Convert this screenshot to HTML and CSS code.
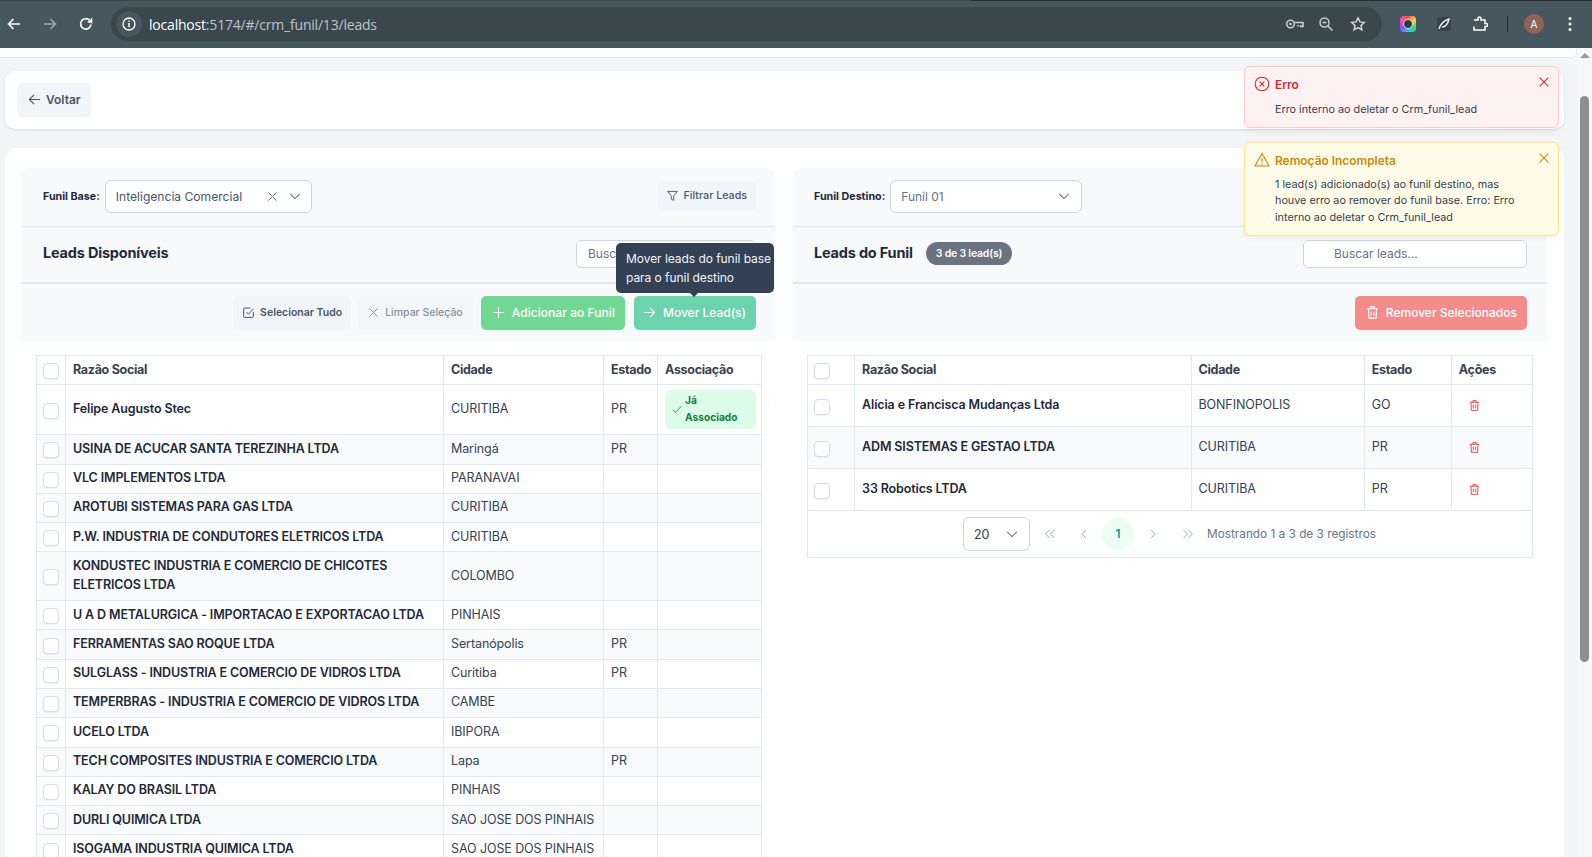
FILE: index.html
```html
<!DOCTYPE html>
<html lang="pt-BR">
<head>
<meta charset="utf-8">
<title>Leads do funil</title>
<link rel="stylesheet" href="styles.css">
</head>
<body>
<svg class="sprite" aria-hidden="true">
  <symbol id="i-trash" viewBox="0 0 16 16"><path d="M2.5 4h11M6 4V2h4v2M3.7 4l.4 10h7.8l.4-10M6.5 7v4.5M9.5 7v4.5" fill="none" stroke="currentColor" stroke-width="1.2"/></symbol>
  <symbol id="i-down" viewBox="0 0 16 16"><path d="M2.5 5.5 8 11l5.5-5.5" fill="none" stroke="currentColor" stroke-width="1.2"/></symbol>
  <symbol id="i-x" viewBox="0 0 16 16"><path d="m3 3 10 10M13 3 3 13" fill="none" stroke="currentColor" stroke-width="1.2"/></symbol>
</svg>
<header class="chrome">
  <div class="tabline"></div>
  <div class="toolbar">
    <svg class="nav" viewBox="0 0 16 16"><path d="M14 8H3M7.500 3 2.500 8l5 5" fill="none" stroke="#fff" stroke-width="1.600"/></svg>
    <svg class="nav nav-off" viewBox="0 0 16 16"><path d="M2 8h11M8.500 3l5 5-5 5" fill="none" stroke="#9aa5ab" stroke-width="1.600"/></svg>
    <svg class="nav" viewBox="0 0 16 16"><path d="M13 8.500A5.200 5.200 0 1 1 11.500 4.200L13.500 6V2.200M13.500 6H9.700" fill="none" stroke="#fff" stroke-width="1.700"/></svg>
    <div class="omnibox">
      <span class="site-info"><svg viewBox="0 0 16 16"><circle cx="8" cy="8" r="6" fill="none" stroke="#fff" stroke-width="1.300"/><path d="M8 7v4.200M8 4.500v1.300" stroke="#fff" stroke-width="1.500"/></svg></span>
      <span class="url"><span class="url-host">localhost</span>:5174/#/crm_funil/13/leads</span>
      <span class="omni-actions">
        <svg viewBox="0 0 20 16"><circle cx="5.500" cy="8" r="3.800" fill="none" stroke="#c9d0d4" stroke-width="1.500"/><circle cx="5.500" cy="8" r="1.300" fill="#c9d0d4"/><path d="M9.500 6.500h8.500v4h-2.500V9M13 9v1.500" fill="none" stroke="#c9d0d4" stroke-width="1.500"/></svg>
        <svg viewBox="0 0 16 16"><circle cx="6.500" cy="6.500" r="4.500" fill="none" stroke="#c9d0d4" stroke-width="1.500"/><path d="m10 10 4.500 4.500M4.500 6.500h4" stroke="#c9d0d4" stroke-width="1.500"/></svg>
        <svg viewBox="0 0 16 16"><path d="m8 1.800 1.900 4.100 4.400.5-3.300 3 .9 4.400L8 11.600l-3.900 2.200.9-4.400-3.300-3 4.400-.5z" fill="none" stroke="#d5dadd" stroke-width="1.400"/></svg>
      </span>
    </div>
    <span class="ring"><span class="ring-core"></span></span>
    <svg class="ext ext-pen" viewBox="0 0 16 16"><rect x="1" y="1" width="14" height="14" rx="2" fill="#35444c"/><path d="M3 13c1-4 4-8 10-10-1 5-4 8-7 8" fill="none" stroke="#e8edf0" stroke-width="1.500"/></svg>
    <svg class="ext ext-puzzle" viewBox="0 0 16 16"><path d="M2 4h4V2.500a1.500 1.500 0 0 1 3 0V4h4v3.500h1.200a1.500 1.500 0 0 1 0 3H13V14H2v-3.500" fill="none" stroke="#fff" stroke-width="1.500"/></svg>
    <span class="divider"></span>
    <span class="avatar">A</span>
    <svg class="dots" viewBox="0 0 4 16"><circle cx="2" cy="2.500" r="1.500" fill="#fff"/><circle cx="2" cy="8" r="1.500" fill="#fff"/><circle cx="2" cy="13.500" r="1.500" fill="#fff"/></svg>
  </div>
</header>

<div class="viewport">
  <div class="app">
    <div class="app-strip"></div>
    <main class="content">
      <section class="card topcard">
        <button class="btn btn-back">
          <svg viewBox="0 0 16 16"><path d="M14 8H2.500M7.500 3l-5 5 5 5" fill="none" stroke="currentColor" stroke-width="1.200"/></svg>Voltar
        </button>
      </section>

      <section class="card board">
        <div class="panel">
          <div class="panel-row row-funnel">
            <label class="field-label">Funil Base:</label>
            <div class="select select-base">
              <span class="select-value">Inteligencia Comercial</span>
              <svg class="sel-x"><use href="#i-x"/></svg>
              <svg class="sel-down"><use href="#i-down"/></svg>
            </div>
            <button class="btn btn-filter">
              <svg viewBox="0 0 16 16"><path d="M2 3h12L9.500 8.500V14l-3-1.500v-4z" fill="none" stroke="currentColor" stroke-width="1.100"/></svg>Filtrar Leads
            </button>
          </div>
          <div class="panel-row row-title">
            <h2>Leads Disponíveis</h2>
            <div class="search search-left">Buscar leads...</div>
          </div>
          <div class="panel-row row-actions">
            <button class="btn btn-soft">
              <svg viewBox="0 0 16 16"><path d="M14 7.500V13a1 1 0 0 1-1 1H3a1 1 0 0 1-1-1V3.500a1 1 0 0 1 1-1h7.500M5.500 7.500 8 10l6-6.500" fill="none" stroke="currentColor" stroke-width="1.200"/></svg>Selecionar Tudo
            </button>
            <button class="btn btn-soft btn-dim">
              <svg><use href="#i-x"/></svg>Limpar Seleção
            </button>
            <button class="btn btn-add">
              <svg viewBox="0 0 16 16"><path d="M8 2v12M2 8h12" stroke="currentColor" stroke-width="1.200"/></svg>Adicionar ao Funil
            </button>
            <button class="btn btn-move">
              <svg viewBox="0 0 16 16"><path d="M2 8h11.500M8.500 3l5 5-5 5" fill="none" stroke="currentColor" stroke-width="1.200"/></svg>Mover Lead(s)
            </button>
          </div>
          <div class="table-wrap">
            <table class="grid grid-left">
              <colgroup><col class="lc1"><col class="lc2"><col class="lc3"><col class="lc4"><col class="lc5"></colgroup>
              <thead><tr><th><span class="check"></span></th><th>Razão Social</th><th>Cidade</th><th>Estado</th><th>Associação</th></tr></thead>
              <tbody>
                <tr class="row-tall"><td><span class="check"></span></td><td class="name">Felipe Augusto Stec</td><td>CURITIBA</td><td>PR</td><td><span class="assoc"><svg viewBox="0 0 16 16"><path d="m2.500 9 3.500 3.500 7.500-8" fill="none" stroke="currentColor" stroke-width="1.200"/></svg><span>Já Associado</span></span></td></tr>
                <tr><td><span class="check"></span></td><td class="name">USINA DE ACUCAR SANTA TEREZINHA LTDA</td><td>Maringá</td><td>PR</td><td></td></tr>
                <tr><td><span class="check"></span></td><td class="name">VLC IMPLEMENTOS LTDA</td><td>PARANAVAI</td><td></td><td></td></tr>
                <tr><td><span class="check"></span></td><td class="name">AROTUBI SISTEMAS PARA GAS LTDA</td><td>CURITIBA</td><td></td><td></td></tr>
                <tr><td><span class="check"></span></td><td class="name">P.W. INDUSTRIA DE CONDUTORES ELETRICOS LTDA</td><td>CURITIBA</td><td></td><td></td></tr>
                <tr><td><span class="check"></span></td><td class="name">KONDUSTEC INDUSTRIA E COMERCIO DE CHICOTES ELETRICOS LTDA</td><td>COLOMBO</td><td></td><td></td></tr>
                <tr><td><span class="check"></span></td><td class="name">U A D METALURGICA - IMPORTACAO E EXPORTACAO LTDA</td><td>PINHAIS</td><td></td><td></td></tr>
                <tr><td><span class="check"></span></td><td class="name">FERRAMENTAS SAO ROQUE LTDA</td><td>Sertanópolis</td><td>PR</td><td></td></tr>
                <tr><td><span class="check"></span></td><td class="name">SULGLASS - INDUSTRIA E COMERCIO DE VIDROS LTDA</td><td>Curitiba</td><td>PR</td><td></td></tr>
                <tr><td><span class="check"></span></td><td class="name">TEMPERBRAS - INDUSTRIA E COMERCIO DE VIDROS LTDA</td><td>CAMBE</td><td></td><td></td></tr>
                <tr><td><span class="check"></span></td><td class="name">UCELO LTDA</td><td>IBIPORA</td><td></td><td></td></tr>
                <tr><td><span class="check"></span></td><td class="name">TECH COMPOSITES INDUSTRIA E COMERCIO LTDA</td><td>Lapa</td><td>PR</td><td></td></tr>
                <tr><td><span class="check"></span></td><td class="name">KALAY DO BRASIL LTDA</td><td>PINHAIS</td><td></td><td></td></tr>
                <tr><td><span class="check"></span></td><td class="name">DURLI QUIMICA LTDA</td><td>SAO JOSE DOS PINHAIS</td><td></td><td></td></tr>
                <tr><td><span class="check"></span></td><td class="name">ISOGAMA INDUSTRIA QUIMICA LTDA</td><td>SAO JOSE DOS PINHAIS</td><td></td><td></td></tr>
              </tbody>
            </table>
          </div>
          <div class="tooltip">Mover leads do funil base para o funil destino</div>
        </div>

        <div class="panel">
          <div class="panel-row row-funnel">
            <label class="field-label">Funil Destino:</label>
            <div class="select select-dest">
              <span class="select-value select-muted">Funil 01</span>
              <svg class="sel-down"><use href="#i-down"/></svg>
            </div>
          </div>
          <div class="panel-row row-title">
            <h2>Leads do Funil</h2>
            <span class="count">3 de 3 lead(s)</span>
            <div class="search search-right">Buscar leads...</div>
          </div>
          <div class="panel-row row-actions">
            <button class="btn btn-remove"><svg><use href="#i-trash"/></svg>Remover Selecionados</button>
          </div>
          <div class="table-wrap table-wrap-right">
            <table class="grid grid-right">
              <colgroup><col class="rc1"><col class="rc2"><col class="rc3"><col class="rc4"><col class="rc5"></colgroup>
              <thead><tr><th><span class="check"></span></th><th>Razão Social</th><th>Cidade</th><th>Estado</th><th>Ações</th></tr></thead>
              <tbody>
                <tr><td><span class="check"></span></td><td class="name">Alícia e Francisca Mudanças Ltda</td><td>BONFINOPOLIS</td><td>GO</td><td><svg class="row-trash"><use href="#i-trash"/></svg></td></tr>
                <tr><td><span class="check"></span></td><td class="name">ADM SISTEMAS E GESTAO LTDA</td><td>CURITIBA</td><td>PR</td><td><svg class="row-trash"><use href="#i-trash"/></svg></td></tr>
                <tr><td><span class="check"></span></td><td class="name">33 Robotics LTDA</td><td>CURITIBA</td><td>PR</td><td><svg class="row-trash"><use href="#i-trash"/></svg></td></tr>
              </tbody>
            </table>
            <div class="pager">
              <div class="select select-size"><span>20</span><svg class="sel-down"><use href="#i-down"/></svg></div>
              <svg class="pg first" viewBox="0 0 16 16"><path d="M7.500 3.500 3 8l4.500 4.500M13 3.500 8.500 8l4.500 4.500" fill="none" stroke="currentColor" stroke-width="1.100"/></svg>
              <svg class="pg prev" viewBox="0 0 16 16"><path d="M10 3.500 5.500 8l4.500 4.500" fill="none" stroke="currentColor" stroke-width="1.100"/></svg>
              <span class="pg-current">1</span>
              <svg class="pg next" viewBox="0 0 16 16"><path d="M6 3.500 10.500 8 6 12.500" fill="none" stroke="currentColor" stroke-width="1.100"/></svg>
              <svg class="pg last" viewBox="0 0 16 16"><path d="M3 3.500 7.500 8 3 12.500M8.500 3.500 13 8l-4.500 4.500" fill="none" stroke="currentColor" stroke-width="1.100"/></svg>
              <span class="pg-info">Mostrando 1 a 3 de 3 registros</span>
            </div>
          </div>
        </div>
      </section>
    </main>
  </div>
  <div class="scrollbar">
    <span class="sb-arrow"></span>
    <span class="sb-thumb"></span>
  </div>
</div>

<aside class="toasts">
  <div class="toast toast-error">
    <svg class="toast-icon" viewBox="0 0 16 16"><circle cx="8" cy="8" r="6.800" fill="none" stroke="currentColor" stroke-width="1.100"/><path d="m5.700 5.700 4.600 4.600M10.300 5.700l-4.600 4.600" stroke="currentColor" stroke-width="1.100"/></svg>
    <div class="toast-body"><strong>Erro</strong><p>Erro interno ao deletar o Crm_funil_lead</p></div>
    <svg class="toast-close"><use href="#i-x"/></svg>
  </div>
  <div class="toast toast-warn">
    <svg class="toast-icon" viewBox="0 0 16 16"><path d="M8 1.500 15 14H1zM8 6v4.300M8 11.500v1.200" fill="none" stroke="currentColor" stroke-width="1.100"/></svg>
    <div class="toast-body"><strong>Remoção Incompleta</strong><p>1 lead(s) adicionado(s) ao funil destino, mas houve erro ao remover do funil base. Erro: Erro interno ao deletar o Crm_funil_lead</p></div>
    <svg class="toast-close"><use href="#i-x"/></svg>
  </div>
</aside>
</body>
</html>
```
FILE: styles.css
```css
* { box-sizing: border-box; }
html, body { margin: 0; height: 100%; overflow: hidden; }
body { font-family: Inter, "Liberation Sans", sans-serif; font-size: 13px; color: #1e293b; background: #fff; display: flex; flex-direction: column; height: 857px; }
.sprite { display: none; }
svg { display: block; flex: none; }
button { font: inherit; border: 0; margin: 0; }

/* browser chrome */
.chrome { height: 48px; flex: none; background: #47575f; }
.tabline { height: 1px; background: linear-gradient(90deg, #3a464d 0 61%, #222b30 61% 100%); }
.toolbar { height: 47px; display: flex; align-items: center; padding-left: 6px; padding-bottom: 1px; }
.nav { width: 16px; height: 16px; margin-right: 20px; }
.omnibox { width: 1271px; height: 34px; margin-left: -3px; border-radius: 17px; background: #3a474e; display: flex; align-items: center; padding-left: 5px; }
.site-info { width: 26px; height: 26px; border-radius: 50%; background: #47565e; display: flex; align-items: center; justify-content: center; }
.site-info svg { width: 16px; height: 16px; }
.url { margin-left: 7px; font-family: "Open Sans", sans-serif; font-size: 14px; color: #bac4c9; letter-spacing: -.2px; }
.url-host { color: #fff; }
.omni-actions { margin-left: auto; display: flex; align-items: center; gap: 16px; margin-right: 16px; }
.omni-actions svg { width: 16px; height: 16px; }
.omni-actions svg:first-child { width: 20px; margin-right: -3px; }
.ring { width: 16px; height: 16px; margin-left: 18px; border-radius: 4px; background: conic-gradient(#ff4d4d, #ffd23f, #38d66b, #2dc3ff, #8a4dff, #ff4da6, #ff4d4d); display: flex; align-items: center; justify-content: center; }
.ring-core { width: 10px; height: 10px; border-radius: 50%; background: #2e3a40; border: 1.5px solid #dfe6ea; }
.ext { width: 16px; height: 16px; }
.ext-pen { margin-left: 20px; }
.ext-puzzle { margin-left: 20px; }
.divider { width: 1px; height: 16px; margin-left: 19px; background: #232c31; }
.avatar { width: 20px; height: 20px; margin-left: 16px; border-radius: 50%; background: #8d6455; color: #fff; font-size: 10px; display: flex; align-items: center; justify-content: center; }
.dots { width: 4px; height: 16px; margin-left: 24px; }

/* page */
.viewport { flex: 1; min-height: 0; display: flex; }
.app { flex: 1; min-width: 0; display: flex; flex-direction: column; overflow: hidden; }
.app-strip { height: 10px; flex: none; background: #fff; border-bottom: 1px solid #e2e8f0; border-bottom-right-radius: 5px; border-right: 1px solid #e2e8f0; }
.content { flex: 1; min-height: 0; overflow: hidden; background: #f3f4f6; padding: 13px 13px 0 5px; display: flex; flex-direction: column; gap: 19px; }
.scrollbar { width: 15px; flex: none; background: #f7f7f7; position: relative; display: flex; flex-direction: column; align-items: center; }
.sb-arrow { margin-top: 5px; width: 0; height: 0; border-left: 5px solid transparent; border-right: 5px solid transparent; border-bottom: 5px solid #9a9a9a; }
.sb-thumb { width: 9px; height: 566px; margin-top: 38px; border-radius: 5px; background: #8f8f8f; }

.card { background: #fff; border-radius: 10px; box-shadow: 0 1px 3px rgba(15, 23, 42, .1); flex: none; }
.topcard { height: 58px; padding: 12px; display: flex; align-items: flex-start; }
.board { flex: 1; min-height: 0; overflow: hidden; padding: 20px 18px 0 17px; display: flex; gap: 18px; border-radius: 10px 10px 0 0; box-shadow: none; }
.panel { position: relative; flex: 1; min-width: 0; display: flex; flex-direction: column; border-radius: 10px 10px 0 0; box-shadow: 0 0 3px rgba(15, 23, 42, .05); }
.panel-row { background: #f8f9fb; display: flex; align-items: center; padding: 0 19px 0 21px; flex: none; }
.row-funnel { height: 59px; padding-bottom: 2px; border-bottom: 1px solid #e2e8f0; border-radius: 10px 10px 0 0; }
.row-title { height: 57px; padding-bottom: 2px; border-bottom: 2px solid #e2e8f0; }
.row-actions { height: 57px; justify-content: flex-end; gap: 8px; }
.field-label { font-size: 10.700px; font-weight: 700; color: #1e293b; margin-right: 5px; }
.select { background: #fff; border: 1px solid #cbd5e1; border-radius: 6px; display: flex; align-items: center; height: 33px; }
.select-base { width: 207px; padding: 0 9px 0 10px; font-size: 12.100px; color: #475569; }
.select-dest { width: 192px; padding: 0 10px; font-size: 12px; }
.select-muted { color: #64748b; }
.select-value { flex: 1; white-space: nowrap; }
.sel-x { width: 13px; height: 13px; margin-right: 9px; color: #64748b; }
.sel-down { width: 14px; height: 14px; color: #64748b; }
h2 { margin: 0 0 3px; font-size: 14.500px; font-weight: 700; color: #1e293b; letter-spacing: -.2px; }
.search { background: #fff; border: 1px solid #cbd5e1; border-radius: 5px; height: 28px; display: flex; align-items: center; padding-left: 30px; color: #64748b; font-size: 12px; margin-left: auto; }
.search-left { width: 180px; padding-left: 11px; }
.search-right { width: 224px; }
.count { margin-left: 13px; margin-bottom: 1px; height: 23px; padding: 0 10px; border-radius: 12px; background: #6b7280; color: #fff; font-size: 10.500px; font-weight: 600; display: flex; align-items: center; letter-spacing: -.2px; }

.btn { display: inline-flex; align-items: center; white-space: nowrap; border-radius: 5px; cursor: pointer; }
.btn-back { height: 34px; padding: 0 10px 1px; gap: 4px; background: #f1f5f9; color: #475569; font-weight: 600; font-size: 12px; }
.btn-back svg { width: 15px; height: 15px; }
.btn-filter { margin-left: auto; height: 28px; padding: 0 9px 2px 8px; gap: 5px; background: #f1f5f9; color: #475569; font-size: 10.700px; font-weight: 500; }
.btn-filter svg { width: 13px; height: 13px; }
.btn-soft { height: 34px; padding: 0 9px; gap: 5px; background: #f1f5f9; color: #475569; font-size: 10.500px; font-weight: 600; }
.btn-soft svg { width: 13px; height: 13px; }
.btn-dim { opacity: .65; font-weight: 500; padding: 0 10px 0 9px; margin-left: -1px; }
.btn-add, .btn-move, .btn-remove { height: 34px; padding: 0 10px; gap: 6px; color: #fff; font-size: 12px; font-weight: 500; }
.btn-add svg, .btn-move svg, .btn-remove svg { width: 15px; height: 15px; }
.btn-add { background: #73d794; letter-spacing: .05px; }
.btn-move { background: #6bd3ad; padding-left: 8px; margin-left: 1px; }
.btn-remove { background: #f58c8c; }

/* tables */
.table-wrap { padding: 14px 14px 0; flex: 1; background: #fff; }
.table-wrap-right { padding-right: 13px; }
.grid { width: 100%; table-layout: fixed; border-collapse: collapse; border: 1px solid #e2e8f0; }
.grid th, .grid td { border: 1px solid #e2e8f0; padding: 3.500px 7px 5.500px; line-height: 19.300px; font-size: 12.500px; text-align: left; color: #334155; letter-spacing: -.1px; }
.grid th { font-weight: 700; color: #374151; height: 29px; letter-spacing: -.3px; }
.grid th:first-child, .grid td:first-child { padding-left: 6px; padding-top: 4.500px; padding-bottom: 4.500px; }
.grid tbody tr:nth-child(even) td { background: #f8fafc; }
.grid .name { font-weight: 600; color: #1e293b; letter-spacing: -.13px; }
.lc1 { width: 29px; } .lc2 { width: 378px; } .lc3 { width: 160px; } .lc4 { width: 54px; } .lc5 { width: 104px; }
.rc1 { width: 47px; } .rc2 { width: 336px; } .rc3 { width: 173px; } .rc4 { width: 87px; } .rc5 { width: 81px; }
.check { display: block; width: 16px; height: 16px; border: 1.500px solid #d5dde6; border-radius: 4px; background: #fff; box-shadow: 0 1px 1px rgba(15, 23, 42, .06); margin-top: 2px; }
.row-tall td { height: 50px; padding-top: 3px; padding-bottom: 6px; }
.row-tall td:last-child { padding-top: 4px; padding-bottom: 5px; }
.assoc { display: flex; align-items: center; gap: 2px; width: 91px; height: 39px; padding: 0 6px; border-radius: 6px; background: #dcfce7; color: #15803d; font-size: 10.200px; font-weight: 700; line-height: 17px; letter-spacing: 0; }
.assoc svg { width: 12px; height: 12px; }
.grid-right tbody td { height: 42px; }
.row-trash { width: 13px; height: 13px; color: #ef4444; margin-left: 9px; margin-top: 2px; }
.pager { height: 48px; margin-top: -1px; border: 1px solid #e2e8f0; display: flex; align-items: center; padding-left: 155px; color: #94a3b8; }
.select-size { width: 67px; height: 34px; padding: 0 10px; font-size: 12.500px; color: #334155; justify-content: space-between; }
.pg { width: 14px; height: 14px; }
.first { margin-left: 13px; }
.prev { margin-left: 20px; }
.next { margin-left: 12px; }
.last { margin-left: 21px; }
.pg-current { width: 32px; height: 32px; margin-left: 11px; border-radius: 50%; background: #ecfdf5; color: #0d9488; font-size: 11.500px; font-weight: 600; display: flex; align-items: center; justify-content: center; }
.pg-info { margin-left: 12px; color: #64748b; font-size: 11.800px; }

.tooltip { position: absolute; left: 594px; top: 75px; width: 158px; height: 50px; padding: 6px 2px 6px 10px; border-radius: 5px; background: #334155; color: #f1f5f9; font-size: 12px; line-height: 19px; letter-spacing: -.05px; }
.tooltip::after { content: ""; position: absolute; left: 74px; bottom: -4px; border-left: 4px solid transparent; border-right: 4px solid transparent; border-top: 4px solid #334155; }

/* toasts */
.toasts { position: absolute; left: 1244px; top: 66px; width: 315px; display: flex; flex-direction: column; gap: 14px; }
.toast { border: 1px solid; border-radius: 6px; display: flex; padding: 9px 7px 8px 9px; gap: 5px; box-shadow: 0 2px 6px rgba(15, 23, 42, .06); }
.toast-error { height: 62px; background: #fdf1f1; border-color: #fecaca; color: #dc2626; }
.toast-warn { height: 94px; background: #fefce8; border-color: #fde68a; color: #ca8a04; }
.toast-icon { width: 16px; height: 16px; }
.toast-body { flex: 1; min-width: 0; }
.toast-body strong { display: block; font-size: 11.900px; font-weight: 600; line-height: 18px; }
.toast-body p { margin: 6.500px 0 0; font-size: 10.800px; line-height: 16.500px; color: #374151; width: 240px; }
.toast-error p { margin-top: 7.500px; }
.toast-close { width: 14px; height: 14px; margin-top: -1px; }
```
